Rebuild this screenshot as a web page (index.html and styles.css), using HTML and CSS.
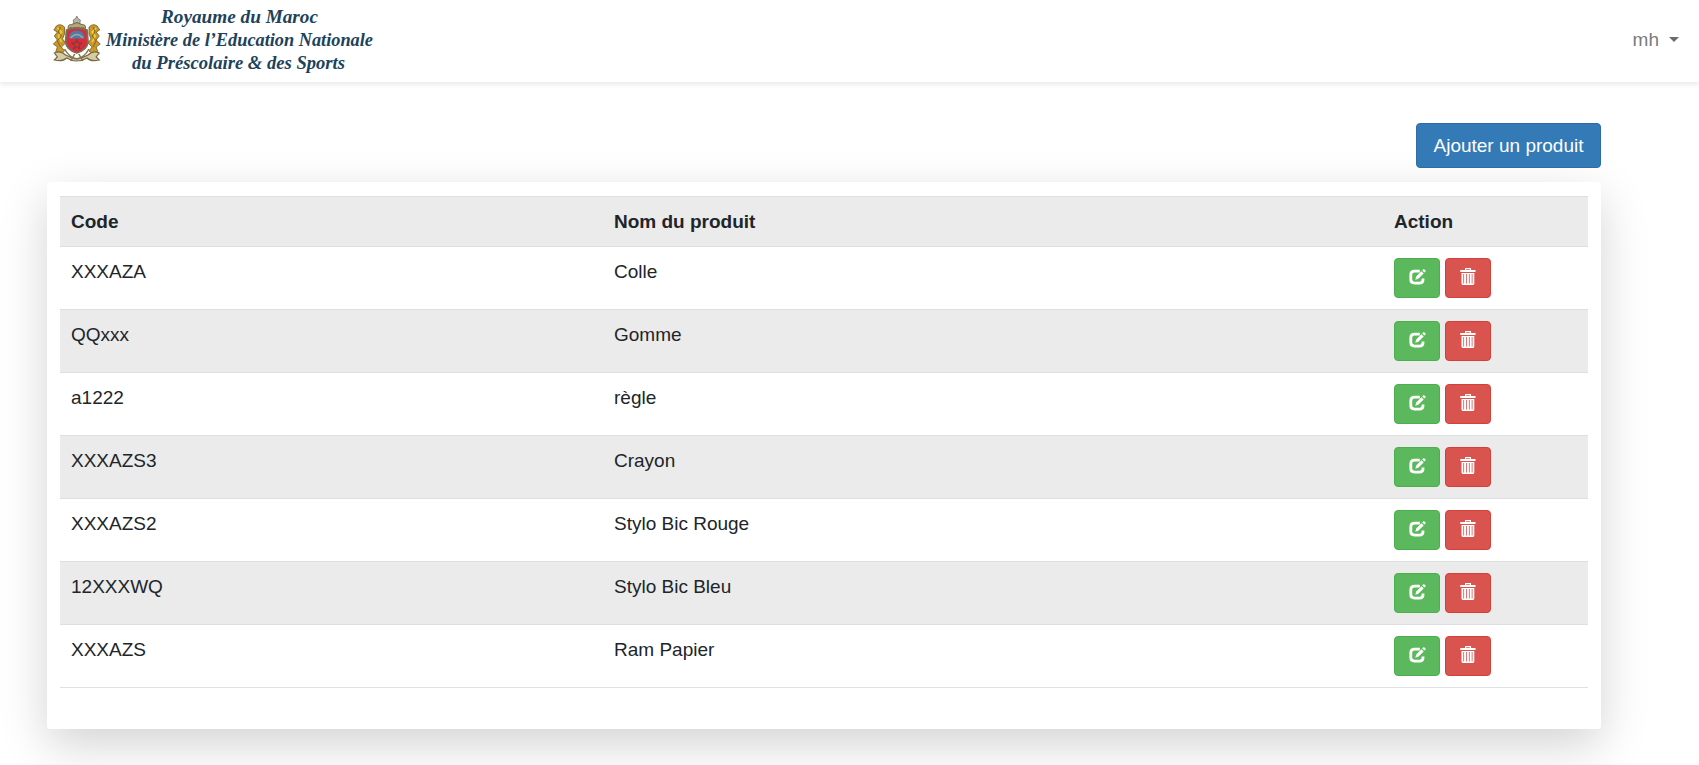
FILE: index.html
```html
<!DOCTYPE html>
<html lang="fr">
<head>
<meta charset="utf-8">
<title>Produits</title>
<link rel="stylesheet" href="styles.css">
</head>
<body>
<svg class="sprite" aria-hidden="true">
  <symbol id="edit" viewBox="0 0 17 16">
    <path d="M10.800 2.100H5.600C3.200 2.100 1.800 3.500 1.800 5.700V10.600C1.800 12.700 3.200 14.100 5.600 14.100H10.400C12.600 14.100 14 12.700 14 10.700V9.400" fill="none" stroke="#fff" stroke-width="2.800"/>
    <path d="M6.300 10.800L7.200 7.600L12.400 2.200L14.700 4.400L9.300 9.800ZM13.200 1.400L14.400.3Q15 0 15.500.4L16.600 1.400Q17 1.900 16.500 2.400L15.400 3.500Z" fill="#fff"/>
  </symbol>
  <symbol id="trash" viewBox="0 0 16 17">
    <path d="M5 2V0H11V2H15.500V4H.2V2ZM6.200 1.200V2H9.800V1.200ZM1.500 5H14.300V15.600Q14.300 17 13 17H2.800Q1.500 17 1.500 15.600ZM3.300 6V15.500H4.100V6ZM6.100 6V15.500H6.900V6ZM8.900 6V15.500H9.700V6ZM11.700 6V15.500H12.500V6Z" fill="#fff" fill-rule="evenodd"/>
  </symbol>
</svg>
<nav class="navbar">
  <svg class="brand" width="336" height="82" viewBox="0 0 336 82">
    <g class="emblem" transform="translate(0.300 0) scale(1.020 1)">
      <path d="M24 16L25.200 18.500L27.500 20L26.500 26H21.500L20.500 20L22.800 18.500Z" fill="#b9b5a4" stroke="#77756a" stroke-width=".8"/>
      <path d="M16 30Q14 24.500 19 24.500L24 22.500L29 24.500Q34 24.500 32 30Z" fill="#b7a578" stroke="#716957"/>
      <path d="M17 28H31" stroke="#a24a42" stroke-width="1.500" stroke-dasharray="2 2"/>
      <path d="M12 27Q8 23 4 26L1.500 30L5 32L2 36L5 40L1 44L5 47L3 53L7 55L12 51L9 47L13 43L10 39L12 34Z" fill="#c99a2a" stroke="#735b2a" stroke-width=".8"/>
      <path d="M36 27Q40 23 44 26L46.500 30L43 32L46 36L43 40L47 44L43 47L45 53L41 55L36 51L39 47L35 43L38 39L36 34Z" fill="#c99a2a" stroke="#735b2a" stroke-width=".8"/>
      <path d="M5 28L9 32L6 36L9 42M43 28L39 32L42 36L39 42" fill="none" stroke="#efd23c" stroke-width="1.500"/>
      <path d="M8 27L6 32L9 36L5 41L8 47M40 27L42 32L39 36L43 41L40 47" fill="none" stroke="#6f5527" stroke-width=".8"/>
      <path d="M14 30Q24 26 34 30L35 42Q34 50 24 53Q14 50 13 42Z" fill="#d92c3a" stroke="#777053" stroke-width="1.800"/>
      <path d="M16 38.500Q17 30.500 24 30.500Q31 30.500 32 38.500Z" fill="#4e79ad"/>
      <path d="M18 38Q24 31 30 38" fill="none" stroke="#a6a58c" stroke-width="1.500"/>
      <path d="M24 39L25.300 43L29 43L26 45.300L27.200 49L24 46.800L20.800 49L22 45.300L19 43L22.700 43Z" fill="none" stroke="#4d4a35" stroke-width=".8"/>
      <path d="M2 53Q8 50 13 55Q24 62 35 55Q40 50 46 53L43 57L46 60Q38 62 34 58Q24 64 14 58Q10 62 2 60L5 57Z" fill="#d5cca2" stroke="#766944" stroke-width="1.200"/>
      <path d="M12 49Q17 58 24 59Q31 58 36 49M18 61L22 54M30 61L26 54" fill="none" stroke="#82744e" stroke-width="1.500"/>
    </g>
    <g class="brand-text">
      <text x="109" y="23" textLength="157" lengthAdjust="spacingAndGlyphs">Royaume du Maroc</text>
      <text x="54" y="46" textLength="267" lengthAdjust="spacingAndGlyphs">Ministère de l’Education Nationale</text>
      <text x="80" y="69" textLength="213" lengthAdjust="spacingAndGlyphs">du Préscolaire &amp; des Sports</text>
    </g>
  </svg>
  <a class="user">mh<span class="caret"></span></a>
</nav>
<main class="content">
  <div class="toolbar"><a class="btn btn-primary">Ajouter un produit</a></div>
  <section class="card">
    <table class="table">
      <colgroup><col class="col-code"><col class="col-name"><col></colgroup>
      <thead><tr><th>Code</th><th>Nom du produit</th><th>Action</th></tr></thead>
      <tbody>
        <tr><td>XXXAZA</td><td>Colle</td><td><div class="actions"><a class="btn btn-success"><svg class="i-edit"><use href="#edit"/></svg></a><a class="btn btn-danger"><svg class="i-trash"><use href="#trash"/></svg></a></div></td></tr>
        <tr><td>QQxxx</td><td>Gomme</td><td><div class="actions"><a class="btn btn-success"><svg class="i-edit"><use href="#edit"/></svg></a><a class="btn btn-danger"><svg class="i-trash"><use href="#trash"/></svg></a></div></td></tr>
        <tr><td>a1222</td><td>règle</td><td><div class="actions"><a class="btn btn-success"><svg class="i-edit"><use href="#edit"/></svg></a><a class="btn btn-danger"><svg class="i-trash"><use href="#trash"/></svg></a></div></td></tr>
        <tr><td>XXXAZS3</td><td>Crayon</td><td><div class="actions"><a class="btn btn-success"><svg class="i-edit"><use href="#edit"/></svg></a><a class="btn btn-danger"><svg class="i-trash"><use href="#trash"/></svg></a></div></td></tr>
        <tr><td>XXXAZS2</td><td>Stylo Bic Rouge</td><td><div class="actions"><a class="btn btn-success"><svg class="i-edit"><use href="#edit"/></svg></a><a class="btn btn-danger"><svg class="i-trash"><use href="#trash"/></svg></a></div></td></tr>
        <tr><td>12XXXWQ</td><td>Stylo Bic Bleu</td><td><div class="actions"><a class="btn btn-success"><svg class="i-edit"><use href="#edit"/></svg></a><a class="btn btn-danger"><svg class="i-trash"><use href="#trash"/></svg></a></div></td></tr>
        <tr><td>XXXAZS</td><td>Ram Papier</td><td><div class="actions"><a class="btn btn-success"><svg class="i-edit"><use href="#edit"/></svg></a><a class="btn btn-danger"><svg class="i-trash"><use href="#trash"/></svg></a></div></td></tr>
      </tbody>
    </table>
  </section>
</main>
</body>
</html>
```
FILE: styles.css
```css
* { box-sizing: border-box; }
html { overflow: hidden; }
body {
  margin: 0;
  height: 765px;
  overflow: hidden;
  background: #fff;
  color: #212529;
  font: 19px/27px "Liberation Sans", Arial, sans-serif;
}
.sprite { display: none; }
.navbar {
  display: flex;
  justify-content: space-between;
  align-items: center;
  height: 82px;
  padding: 0 20px 0 52px;
  background: #fff;
  box-shadow: 0 3px 4px rgba(0, 0, 0, .075);
}
.brand { display: block; }
.brand-text {
  fill: #1d425b;
  font: italic bold 19px "Liberation Serif", serif;
}
.user {
  display: flex;
  align-items: center;
  gap: 10px;
  color: #7b7b7b;
  padding-bottom: 4px;
}
.caret {
  border: 5px solid transparent;
  border-top-color: #6c6c6c;
  border-bottom: 0;
}
.content { padding: 41px 98px 0 47px; }
.toolbar {
  display: flex;
  justify-content: flex-end;
  padding-bottom: 14px;
}
.btn {
  display: flex;
  align-items: center;
  justify-content: center;
  border: 1px solid;
  border-radius: 4px;
  color: #fff;
}
.btn-primary {
  width: 185px;
  height: 45px;
  background: #337ab7;
  border-color: #2e6da4;
}
.btn-success, .btn-danger { width: 46px; height: 40px; }
.btn-success { background: #5cb85c; border-color: #4cae4c; }
.btn-danger { background: #d9534f; border-color: #d43f3a; }
.card {
  height: 547px;
  padding: 14px 13px;
  background: #fff;
  border-radius: 3px;
  box-shadow: 0 16px 48px rgba(0, 0, 0, .175);
}
.table {
  width: 100%;
  table-layout: fixed;
  border-collapse: separate;
  border-spacing: 0;
  border-bottom: 1px solid #dee2e6;
}
.col-code { width: 543px; }
.col-name { width: 780px; }
th, td {
  height: 63px;
  padding: 11px;
  border-top: 1px solid #dddfe1;
  text-align: left;
  vertical-align: top;
}
th { height: 50px; }
thead tr, tbody tr:nth-child(even) { background: #ebebeb; }
.actions { display: flex; gap: 5px; }
.i-edit { width: 17px; height: 16px; margin-bottom: 2px; }
.i-trash { width: 16px; height: 17px; margin-bottom: 3px; }
```
